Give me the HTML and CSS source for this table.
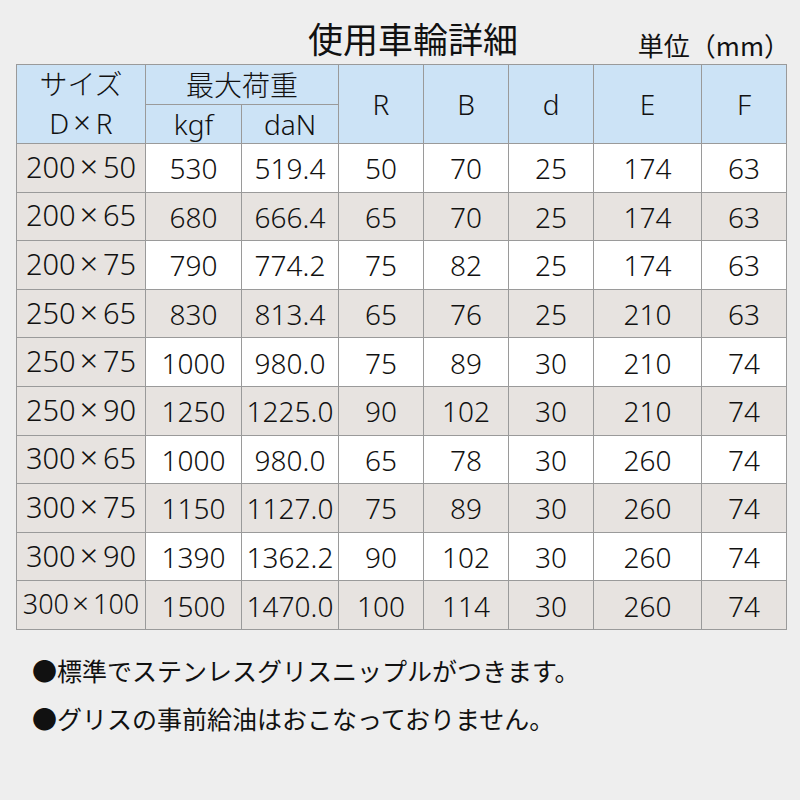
FILE: index.html
```html
<!DOCTYPE html>
<html lang="ja">
<head>
<meta charset="utf-8">
<link rel="stylesheet" href="styles.css">
</head>
<body>
<div class="page">
  <div class="head">
    <h1 class="title">使用車輪詳細</h1>
    <div class="unit">単位（mm）</div>
  </div>
  <table class="spec">
    <colgroup>
      <col class="c-size"><col class="c-kgf"><col class="c-dan"><col class="c-r"><col class="c-b"><col class="c-d"><col class="c-e"><col class="c-f">
    </colgroup>
    <thead>
      <tr class="h1">
        <th rowspan="2" class="size-h">サイズ<br>D<span class="x">×</span>R</th>
        <th colspan="2">最大荷重</th>
        <th rowspan="2">R</th>
        <th rowspan="2">B</th>
        <th rowspan="2">d</th>
        <th rowspan="2">E</th>
        <th rowspan="2">F</th>
      </tr>
      <tr class="h2">
        <th>kgf</th>
        <th>daN</th>
      </tr>
    </thead>
    <tbody>
      <tr><td class="size">200<span class="x">×</span>50</td><td>530</td><td>519.4</td><td>50</td><td>70</td><td>25</td><td>174</td><td>63</td></tr>
      <tr class="alt"><td class="size">200<span class="x">×</span>65</td><td>680</td><td>666.4</td><td>65</td><td>70</td><td>25</td><td>174</td><td>63</td></tr>
      <tr><td class="size">200<span class="x">×</span>75</td><td>790</td><td>774.2</td><td>75</td><td>82</td><td>25</td><td>174</td><td>63</td></tr>
      <tr class="alt"><td class="size">250<span class="x">×</span>65</td><td>830</td><td>813.4</td><td>65</td><td>76</td><td>25</td><td>210</td><td>63</td></tr>
      <tr><td class="size">250<span class="x">×</span>75</td><td>1000</td><td>980.0</td><td>75</td><td>89</td><td>30</td><td>210</td><td>74</td></tr>
      <tr class="alt"><td class="size">250<span class="x">×</span>90</td><td>1250</td><td>1225.0</td><td>90</td><td>102</td><td>30</td><td>210</td><td>74</td></tr>
      <tr><td class="size">300<span class="x">×</span>65</td><td>1000</td><td>980.0</td><td>65</td><td>78</td><td>30</td><td>260</td><td>74</td></tr>
      <tr class="alt"><td class="size">300<span class="x">×</span>75</td><td>1150</td><td>1127.0</td><td>75</td><td>89</td><td>30</td><td>260</td><td>74</td></tr>
      <tr><td class="size">300<span class="x">×</span>90</td><td>1390</td><td>1362.2</td><td>90</td><td>102</td><td>30</td><td>260</td><td>74</td></tr>
      <tr class="alt"><td class="size small">300<span class="x">×</span>100</td><td>1500</td><td>1470.0</td><td>100</td><td>114</td><td>30</td><td>260</td><td>74</td></tr>
    </tbody>
  </table>
  <div class="notes">
    <p>●標準でステンレスグリスニップルがつきます。</p>
    <p>●グリスの事前給油はおこなっておりません。</p>
  </div>
</div>
</body>
</html>
```

FILE: styles.css
```css
html, body {
  margin: 0;
  padding: 0;
  background: #eeeeee;
}
body {
  font-family: "Noto Sans CJK JP", "Noto Sans", sans-serif;
  color: #111;
  width: 800px;
  height: 800px;
  overflow: hidden;
}
.page {
  padding: 0 14px 0 16px;
}
.head {
  position: relative;
  height: 64px;
}
.title {
  margin: 0;
  padding-top: 15px;
  font-size: 35px;
  font-weight: normal;
  line-height: 46px;
  text-align: center;
  padding-left: 24px;
}
.unit {
  position: absolute;
  right: -4px;
  top: 27px;
  font-size: 26px;
  line-height: 36px;
}
.spec {
  border-collapse: collapse;
  table-layout: fixed;
  width: 771px;
  font-family: "Noto Sans", "Noto Sans CJK JP", sans-serif;
  font-weight: 300;
}
.c-size { width: 129px; }
.c-kgf { width: 96px; }
.c-dan { width: 97px; }
.c-r { width: 85px; }
.c-b { width: 85px; }
.c-d { width: 85px; }
.c-e { width: 108px; }
.c-f { width: 85px; }
.spec th, .spec td {
  border: 1px solid #9a9a9a;
  text-align: center;
  padding: 0;
  font-weight: 300;
  font-size: 28px;
}
.spec th {
  background: #cce3f6;
  line-height: 34px;
}
.spec .h1 th { height: 39px; }
.spec .h2 th { height: 38px; }
.spec th.size-h { line-height: 39px; }
.spec td {
  background: #ffffff;
  height: 46.6px;
  line-height: 30px;
  padding-top: 1px;
}
.spec tr.alt td { background: #e7e3e0; }
.spec td.size {
  background: #e7e3e0;
  height: 43.6px;
  padding-top: 0;
  padding-bottom: 4px;
  font-size: 29px;
}
.x {
  display: inline-block;
  margin: 0 5px 0 4px;
  font-size: 1.1em;
  line-height: 1;
}
.spec td.size.small { font-size: 27px; }
.spec td.size.small .x { margin: 0 4px 0 3px; }
.notes {
  padding: 25px 0 0 16px;
}
.notes p {
  margin: 0 0 18px;
  font-size: 25px;
  line-height: 30px;
}
```
